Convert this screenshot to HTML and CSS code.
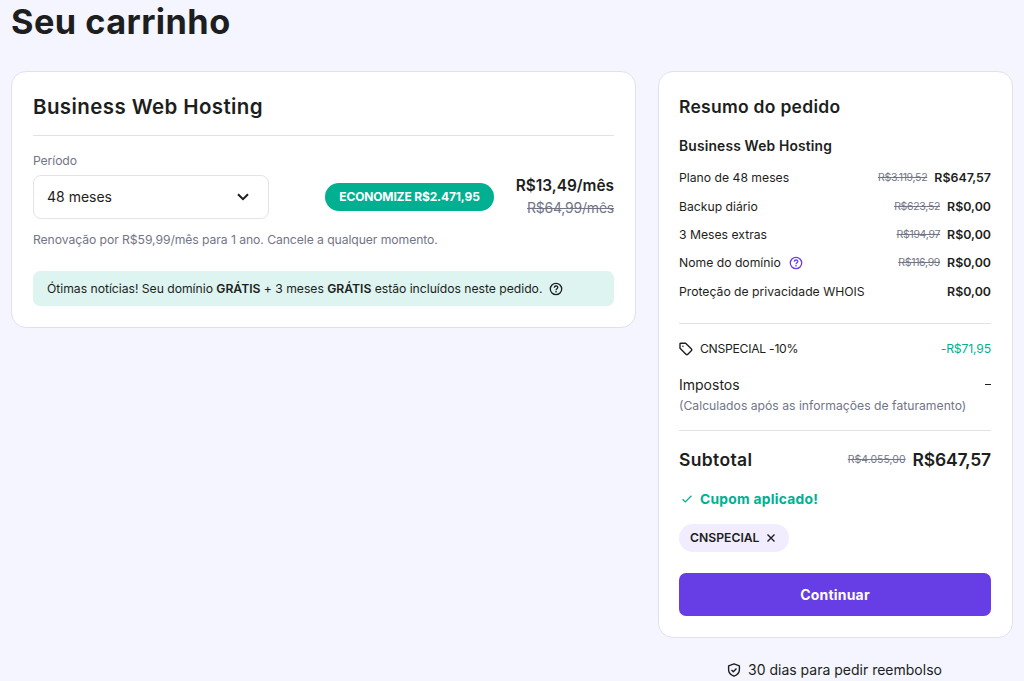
FILE: index.html
```html
<!DOCTYPE html>
<html lang="pt-BR">
<head>
  <meta charset="utf-8">
  <title>Seu carrinho</title>
  <link rel="stylesheet" href="styles.css">
</head>
<body>
<main class="page">
  <h1>Seu carrinho</h1>
  <div class="columns">
    <section class="card product">
      <h2>Business Web Hosting</h2>
      <hr>
      <div class="label"><span>Período</span></div>
      <div class="period-row">
        <div class="select">
          <span>48 meses</span>
          <svg width="12" height="8" viewBox="0 0 12 8"><path d="M1 1.2l5 5 5-5" fill="none" stroke="#1d1e20" stroke-width="2"/></svg>
        </div>
        <div class="save"><span>ECONOMIZE R$2.471,95</span></div>
        <div class="monthly">
          <strong>R$13,49/mês</strong>
          <s>R$64,99/mês</s>
        </div>
      </div>
      <p class="renewal"><span>Renovação por R$59,99/mês para 1 ano. Cancele a qualquer momento.</span></p>
      <div class="notice">
        <span>Ótimas notícias! Seu domínio <b>GRÁTIS</b> + 3 meses <b>GRÁTIS</b> estão incluídos neste pedido.</span>
        <svg class="help" viewBox="0 0 14 14"><circle cx="7" cy="7" r="5.7"/><path d="M5.3 5.7c.1-2.3 3.5-2.2 3.5-.2 0 1.2-1.8 1.2-1.8 2.7M7 9.1v1.3"/></svg>
      </div>
    </section>

    <aside>
      <section class="card summary">
        <h3>Resumo do pedido</h3>
        <h4>Business Web Hosting</h4>
        <ul class="items">
          <li><span>Plano de 48 meses</span><div><s>R$3.119,52</s><b>R$647,57</b></div></li>
          <li><span>Backup diário</span><div><s>R$623,52</s><b>R$0,00</b></div></li>
          <li><span>3 Meses extras</span><div><s>R$194,97</s><b>R$0,00</b></div></li>
          <li>
            <span>Nome do domínio</span>
            <svg class="help purple" viewBox="0 0 14 14"><circle cx="7" cy="7" r="5.7"/><path d="M5.3 5.7c.1-2.3 3.5-2.2 3.5-.2 0 1.2-1.8 1.2-1.8 2.7M7 9.1v1.3"/></svg>
            <div><s>R$116,99</s><b>R$0,00</b></div>
          </li>
          <li><span>Proteção de privacidade WHOIS</span><div><b>R$0,00</b></div></li>
        </ul>
        <hr>
        <div class="discount">
          <svg width="14" height="14" viewBox="0 0 14 14"><path d="M1 1.8v4.4l6.2 6.2q.7.6 1.4 0l3.9-3.9q.6-.7 0-1.4L6.6 1.2H1.7Q1 1.2 1 1.8z" fill="none" stroke="#1d1e20" stroke-width="1.4" stroke-linejoin="round"/><circle cx="3.9" cy="4.2" r=".8" fill="#1d1e20"/></svg>
          <span class="code">CNSPECIAL -10%</span>
          <span class="minus">-R$71,95</span>
        </div>
        <div class="taxes"><span>Impostos</span><i></i></div>
        <p class="tax-note"><span>(Calculados após as informações de faturamento)</span></p>
        <hr>
        <div class="subtotal"><span>Subtotal</span><div><s>R$4.055,00</s><b>R$647,57</b></div></div>
        <div class="applied">
          <svg width="10" height="8" viewBox="0 0 10 8"><path d="M.6 4.2l2.7 2.7L9.4.8" fill="none" stroke="#00b090" stroke-width="1.3"/></svg>
          <span>Cupom aplicado!</span>
        </div>
        <div class="chip">
          <span>CNSPECIAL</span>
          <svg width="8" height="8" viewBox="0 0 8 8"><path d="M.5.5l7 7M7.5.5l-7 7" stroke="#1d1e20" stroke-width="1.4"/></svg>
        </div>
        <button type="button"><span>Continuar</span></button>
      </section>
      <div class="refund">
        <svg width="14" height="14" viewBox="0 0 14 14"><path d="M7 .9l5.4 1.9v4c0 3.3-2.3 5.2-5.4 6.4C3.9 12 1.6 10.1 1.6 6.800v-4zM4.500 6.900l1.800 1.800 3.200-3.300" fill="none" stroke="#1d1e20" stroke-width="1.4" stroke-linejoin="round"/></svg>
        <span>30 dias para pedir reembolso</span>
      </div>
    </aside>
  </div>
</main>
</body>
</html>
```
FILE: styles.css
```css
* {
  box-sizing: border-box;
}
body {
  margin: 0;
  height: 681px;
  overflow: hidden;
  background: #f4f5ff;
  color: #1d1e20;
  font: 400 12.2px/20px Inter, "Open Sans", sans-serif;
}
h1, h2, h3, h4, p, ul {
  margin: 0;
  padding: 0;
}
svg {
  display: block;
  flex: none;
}
span, b, strong, s {
  white-space: nowrap;
}
hr {
  height: 1px;
  margin: 0;
  border: 0;
  background: #e0e1e6;
}
.page {
  padding: 0 11px;
}
h1 {
  height: 71px;
  font-size: 34.3px;
  line-height: 43px;
  font-weight: 700;
  letter-spacing: .45px;
}
.columns {
  display: grid;
  grid-template-columns: 625px 355px;
  gap: 22px;
  align-items: start;
}
.card {
  padding: 0 21px;
  background: #fff;
  border: 1px solid #dfe1ed;
  border-radius: 15px;
}

/* product */
.product {
  height: 257px;
}
h2 {
  padding-top: 20px;
  height: 63px;
  font-size: 20.5px;
  line-height: 30px;
  font-weight: 600;
  letter-spacing: .4px;
}
.label {
  padding-top: 15px;
  height: 39px;
  color: #727586;
  letter-spacing: -.1px;
}
.period-row {
  display: flex;
  align-items: center;
  height: 44px;
}
.select {
  display: flex;
  align-items: center;
  justify-content: space-between;
  width: 236px;
  height: 44px;
  padding: 0 19px 0 13px;
  border: 1px solid #e3e4e9;
  border-radius: 8px;
  font-size: 14px;
}
.save {
  width: 169px;
  height: 28px;
  margin-left: 56px;
  border-radius: 14px;
  background: #00b090;
  color: #fff;
  font-size: 12px;
  line-height: 28px;
  font-weight: 700;
  letter-spacing: -.15px;
  text-align: center;
}
.monthly {
  display: flex;
  flex-direction: column;
  align-items: flex-end;
  margin-left: auto;
  font-size: 14px;
  line-height: 22px;
}
.monthly strong {
  font-size: 15.4px;
  font-weight: 600;
}
.monthly s {
  color: #727586;
  letter-spacing: -.22px;
}
.renewal {
  height: 52px;
  padding-top: 11px;
  color: #727586;
  letter-spacing: -.075px;
}
.notice {
  display: flex;
  align-items: center;
  gap: 7px;
  height: 35px;
  padding-left: 14px;
  border-radius: 7px;
  background: #def4f0;
  letter-spacing: -.025px;
}
.help {
  width: 14px;
  height: 14px;
  fill: none;
  stroke: #1d1e20;
  stroke-width: 1.3;
}
.purple {
  margin-left: 8px;
  stroke: #673de6;
}

/* order summary */
.summary {
  height: 567px;
  padding-left: 20px;
}
h3 {
  height: 60px;
  padding-top: 20px;
  font-size: 17.5px;
  line-height: 30px;
  font-weight: 600;
  letter-spacing: .27px;
}
h4 {
  height: 32px;
  padding-top: 4px;
  font-size: 13.8px;
  font-weight: 600;
  letter-spacing: .18px;
}
.items {
  height: 159px;
  list-style: none;
}
.items li {
  display: flex;
  align-items: center;
  height: 28.4px;
}
.items div {
  display: flex;
  align-items: center;
  gap: 7px;
  margin-left: auto;
}
.items s, .subtotal s {
  color: #727586;
  font-size: 10.5px;
}
.items s {
  letter-spacing: -.3px;
}
b {
  font-weight: 600;
}
.items b {
  font-size: 12.4px;
}
.discount {
  display: flex;
  align-items: center;
  gap: 7px;
  height: 50px;
}
.code {
  letter-spacing: -.28px;
}
.minus {
  margin-left: auto;
  color: #00b090;
  letter-spacing: -.15px;
}
.taxes {
  display: flex;
  align-items: center;
  justify-content: space-between;
  height: 21px;
  font-size: 14px;
}
.taxes i {
  width: 6px;
  height: 1px;
  background: #1d1e20;
}
.tax-note {
  height: 35px;
  padding-top: 1px;
  color: #727586;
}
.subtotal {
  display: flex;
  align-items: center;
  justify-content: space-between;
  height: 57px;
  font-size: 17.5px;
  font-weight: 600;
  letter-spacing: .35px;
}
.subtotal div {
  display: flex;
  align-items: center;
  gap: 7px;
  letter-spacing: -.2px;
}
.subtotal s {
  font-weight: 400;
  letter-spacing: 0;
}
.applied {
  display: flex;
  align-items: center;
  gap: 8px;
  height: 22px;
  padding-left: 3px;
  color: #00b090;
  font-size: 13.8px;
  font-weight: 700;
  letter-spacing: .28px;
}
.chip {
  display: flex;
  align-items: center;
  justify-content: space-between;
  width: 110px;
  height: 28px;
  margin-top: 14px;
  padding: 0 14px 0 11px;
  border-radius: 14px;
  background: #f1edff;
  font-weight: 600;
}
button {
  display: block;
  width: 100%;
  height: 43px;
  margin-top: 21px;
  padding: 0;
  border: 0;
  border-radius: 7px;
  background: #673de6;
  color: #fff;
  font: 700 14px/20px Inter, sans-serif;
  letter-spacing: .2px;
}
.refund {
  display: flex;
  align-items: center;
  justify-content: center;
  gap: 7px;
  width: 353px;
  margin-top: 21px;
  height: 22px;
  font-size: 14px;
}
```
